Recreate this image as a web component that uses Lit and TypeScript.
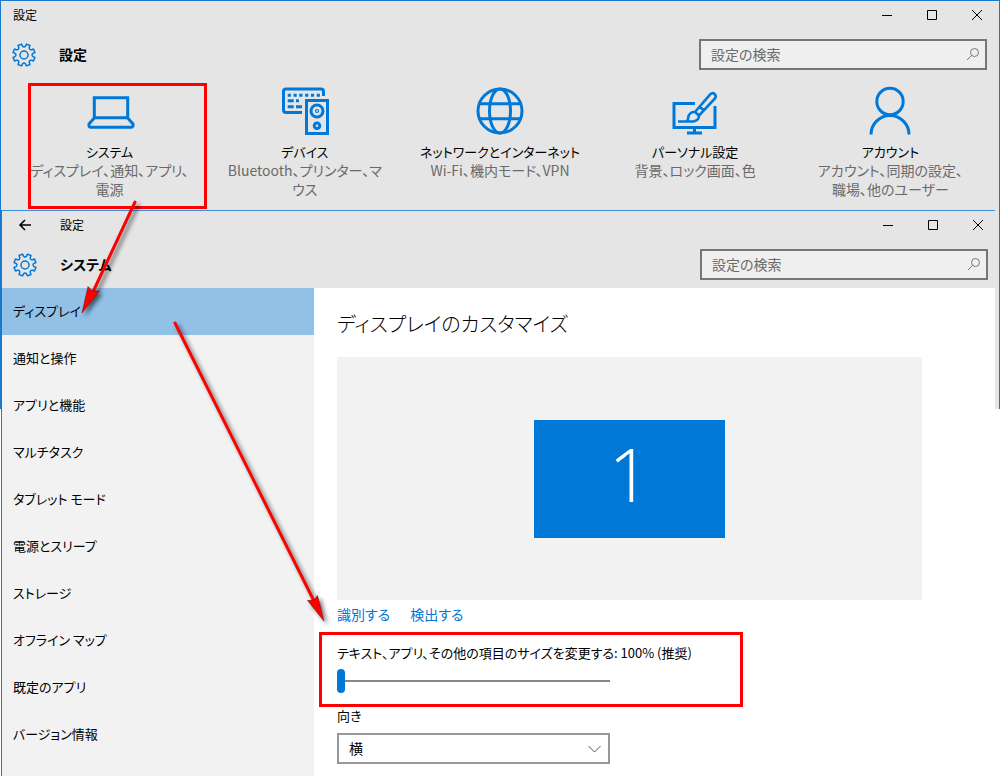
import { LitElement, html, svg, css } from "lit";
import { customElement, property } from "lit/decorators.js";

const gearPath = (() => {
  const pts: string[] = [];
  const n = 8;
  for (let i = 0; i < n; i++) {
    const a = (i / n) * Math.PI * 2 - Math.PI / 2 + Math.PI / 8;
    const at = (r: number, d: number) =>
      `${(12 + r * Math.cos(a + d)).toFixed(2)} ${(12 + r * Math.sin(a + d)).toFixed(2)}`;
    pts.push(`${i ? "L" : "M"}${at(11.2, -0.17)} L${at(11.2, 0.17)} L${at(9.2, 0.22)}`);
    pts.push(`Q${at(7, Math.PI / 8)} ${at(9.2, Math.PI / 4 - 0.22)}`);
  }
  return pts.join(" ") + " Z";
})();

const icons = {
  system: svg`<path d="M8.300 10.800h33.400v20H8.300zM8.300 31L3 37q-.6 3.300 2 3.300h40q2.600 0 2-3.300l-5.300-6"/>`,
  devices: svg`<path d="M21 25.500H5q-2.500 0-2.500-2.500V4.500Q2.500 2 5 2h35q2.500 0 2.500 2.500V9"/><path d="M6.700 8.200H40" stroke-dasharray="3.200 2.600"/><path d="M6.700 13.700h6M15 13.700h3M6.700 19.700h6M15 19.700h6"/><path d="M25.500 13.500h21v33h-21z"/><circle cx="36" cy="24" r="6"/><circle cx="36" cy="24" r="0.600"/><circle cx="36" cy="38.700" r="2.800"/>`,
  network: svg`<circle cx="24" cy="24" r="22"/><ellipse cx="24" cy="24" rx="10.500" ry="22"/><path d="M4 16.700h40M4 31.700h40"/>`,
  personal: svg`<path d="M24 16.500H3v24h41V19M23.500 41v5M16 46h15"/><path d="M7 34.500h9q1-1 1.500-5.500 2-4.500 6.500-4L39.200 7.300a3 3 0 0 1 4.800 4L28 28.500q0 5-5.500 6H14M28.500 19.500l5 4.500M24 25l4.500 4" stroke-width="2.600"/>`,
  accounts: svg`<circle cx="24" cy="14.500" r="13.200"/><path d="M5 47.500a19 19 0 0 1 38 0"/>`,
};

const categories = [
  { icon: icons.system, name: "システム", lines: ["ディスプレイ、通知、アプリ、", "電源"] },
  { icon: icons.devices, name: "デバイス", lines: ["Bluetooth、プリンター、マ", "ウス"] },
  { icon: icons.network, name: "ネットワークとインターネット", lines: ["Wi-Fi、機内モード、VPN"] },
  { icon: icons.personal, name: "パーソナル設定", lines: ["背景、ロック画面、色"] },
  { icon: icons.accounts, name: "アカウント", lines: ["アカウント、同期の設定、", "職場、他のユーザー"] },
];

const sections = ["ディスプレイ", "通知と操作", "アプリと機能", "マルチタスク", "タブレット モード", "電源とスリープ", "ストレージ", "オフライン マップ", "既定のアプリ", "バージョン情報"];

@customElement("settings-header")
class SettingsHeader extends LitElement {
  @property() heading = "";
  @property({ type: Boolean }) back = false;

  static styles = css`
    :host { display: block; background: #e5e5e5; }
    .bar { display: flex; align-items: center; height: 28px; }
    button { border: 0; background: none; padding: 0; display: grid; place-items: center; color: #000; }
    .back { width: 46px; height: 28px; }
    .caption { flex: 1; padding-left: 12px; font-size: 12px; line-height: 28px; }
    .ctl { width: 45px; height: 28px; }
    .row { display: flex; align-items: center; padding: 10px 12px 8px 11px; }
    .title { flex: 1; margin: 0 0 0 23px; padding-bottom: 2px; font-size: 14px; line-height: 20px; font-weight: 700; }
    .search { display: flex; align-items: center; box-sizing: border-box; width: 288px; height: 31px; border: 2px solid #767676; background: #efefef; padding: 0 5px 2px 10px; }
    input { flex: 1; min-width: 0; border: 0; padding: 0; background: none; outline: 0; font: inherit; font-size: 14px; font-feature-settings: "palt"; }
    input::placeholder { color: #6a6a6a; opacity: 1; }
    svg { display: block; fill: none; stroke: currentColor; }
    .gear { stroke: #0078d7; }
    .find { color: #767676; }
  `;

  render() {
    return html`
      <div class="bar">
        ${this.back ? html`<button class="back" aria-label="戻る"><svg width="14" height="14" stroke-width="1.500"><path d="M13 7H2M7 2L2 7l5 5"/></svg></button>` : ""}
        <span class="caption">設定</span>
        <button class="ctl" aria-label="最小化"><svg width="12" height="12"><path d="M1 6.500h10"/></svg></button>
        <button class="ctl" aria-label="最大化"><svg width="12" height="12"><path d="M1.500 1.500h9v9h-9z"/></svg></button>
        <button class="ctl" aria-label="閉じる"><svg width="12" height="12"><path d="M1 1l10 10M11 1L1 11"/></svg></button>
      </div>
      <div class="row">
        <svg class="gear" width="24" height="24" viewBox="0 0 24 24" stroke-width="1.500" stroke-linejoin="round"><path d=${gearPath}/><circle cx="12" cy="12" r="4"/></svg>
        <h1 class="title">${this.heading}</h1>
        <label class="search">
          <input type="text" placeholder="設定の検索" aria-label="設定の検索" />
          <svg class="find" width="14" height="14"><circle cx="8.500" cy="5.500" r="4"/><path d="M5.500 8.500L1 13"/></svg>
        </label>
      </div>`;
  }
}

@customElement("app-root")
class AppRoot extends LitElement {
  static styles = css`
    :host { display: grid; position: relative; min-height: 100vh; overflow: hidden; background: #fff; color: #000;
      font-family: "Noto Sans CJK JP", sans-serif; font-feature-settings: "palt"; font-size: 14px; line-height: 20px; }
    .home, .page { grid-area: 1 / 1; }
    .home { align-self: start; box-sizing: border-box; height: 409px; background: #e5e5e5; border: 1px solid #1979ca; border-bottom: 0; }
    .tiles { display: grid; grid-template-columns: repeat(5, 1fr); padding: 9px 11px 0; }
    .tile { display: flex; flex-direction: column; align-items: center; text-align: center; text-decoration: none; color: #6a6a6a; white-space: nowrap; }
    .tile svg { display: block; fill: none; stroke: #0078d7; stroke-width: 3; margin-bottom: 5px; overflow: visible; }
    .name { color: #000; font-size: 13px; }
    .tile span { line-height: 19px; }
    .page { display: flex; flex-direction: column; margin: 210px 5px 0 1px; border-top: 1px solid #3d91d8; border-left: 1px solid #1979ca; overflow: hidden; background: #fff; }
    .page settings-header { margin-right: -5px; }
    .body { flex: 1; display: flex; }
    nav { width: 312px; background: #f2f2f2; }
    nav a { display: block; padding: 0 0 2px 11px; font-size: 13px; line-height: 45px; color: #000; text-decoration: none; }
    nav a.on { background: #91c1e7; }
    main { flex: 1; padding: 0 73px 0 23px; }
    h2 { margin: 0; padding-top: 19px; font-size: 20px; line-height: 34px; font-weight: 300; }
    .stage { display: grid; place-items: center; height: 243px; margin-top: 16px; background: #f2f2f2; }
    .screen { box-sizing: border-box; width: 191px; height: 118px; text-align: center; background: #0078d7; color: #fff; font-family: "Open Sans", sans-serif; font-size: 74px; line-height: 108px; font-weight: 300; }
    .links { display: flex; gap: 20px; padding-top: 4px; }
    .links a { color: #0078d7; text-decoration: none; }
    .field { display: block; width: max-content; font-size: 13px; }
    .scale { margin-top: 19px; }
    input { -webkit-appearance: none; appearance: none; display: block; width: 273px; height: 24px; margin: 6px 0 0; background: linear-gradient(#868686, #868686) center / 100% 2px no-repeat; }
    input::-webkit-slider-thumb { -webkit-appearance: none; width: 8px; height: 24px; border-radius: 4px; background: #0078d7; }
    .dir { margin-top: 13px; }
    .pick { display: grid; width: 273px; margin-top: 7px; }
    .pick > * { grid-area: 1 / 1; }
    select { -webkit-appearance: none; appearance: none; box-sizing: border-box; width: 100%; height: 31px; border: 2px solid #999; border-radius: 0; padding: 0 10px 2px; background: #fff; color: #000; font: inherit; }
    .chev { place-self: center end; margin-right: 9px; fill: none; stroke: #555; pointer-events: none; }
    .marks { position: absolute; top: 0; left: 0; pointer-events: none; }
    .marks path, .marks rect { fill: none; stroke: #f00; stroke-width: 3; }
    .marks .shaft { stroke-linecap: round; }
    .marks .head { fill: #f00; stroke: #700; stroke-width: 0.5; }
    .arrow { filter: drop-shadow(3px 3px 2px rgba(0, 0, 0, 0.55)); }
  `;

  render() {
    return html`
      <section class="home">
        <settings-header heading="設定"></settings-header>
        <div class="tiles">
          ${categories.map((c) => html`<a class="tile" href="#">
            <svg width="48" height="50" viewBox="0 0 48 50">${c.icon}</svg>
            <span class="name">${c.name}</span>
            ${c.lines.map((l) => html`<span>${l}</span>`)}
          </a>`)}
        </div>
      </section>
      <section class="page">
        <settings-header heading="システム" back></settings-header>
        <div class="body">
          <nav>${sections.map((s, i) => html`<a class=${i ? "" : "on"} href="#">${s}</a>`)}</nav>
          <main>
            <h2>ディスプレイのカスタマイズ</h2>
            <div class="stage"><div class="screen">1</div></div>
            <div class="links"><a href="#">識別する</a><a href="#">検出する</a></div>
            <label class="field scale" for="scale">テキスト、アプリ、その他の項目のサイズを変更する: 100% (推奨)</label>
            <input id="scale" type="range" min="100" max="175" step="25" value="100" />
            <label class="field dir" for="dir">向き</label>
            <div class="pick">
              <select id="dir"><option>横</option></select>
              <svg class="chev" width="13" height="8"><path d="M0.500 1l6 6 6-6"/></svg>
            </div>
          </main>
        </div>
      </section>
      <svg class="marks" width="760" height="776" aria-hidden="true">
        <rect x="29.500" y="84.500" width="176" height="123"/>
        <rect x="320.500" y="633.500" width="421" height="72"/>
        <g class="arrow"><path class="shaft" d="M135 202L92 294"/><path class="head" d="M82 313L88 286.500L92 291L99.500 291Z"/></g>
        <g class="arrow"><path class="shaft" d="M175 323L314 601"/><path class="head" d="M324 621L307.500 600.500L314 600L317.500 595.500Z"/></g>
      </svg>`;
  }
}
